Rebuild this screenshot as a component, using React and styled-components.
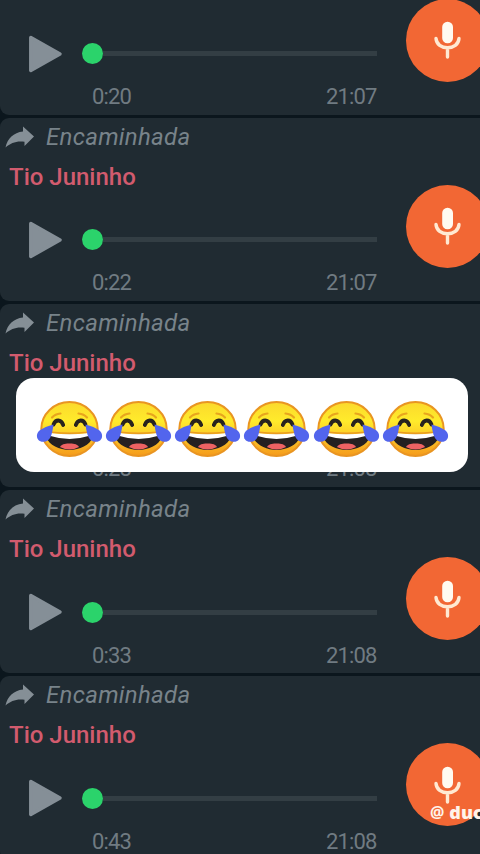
import React from "react"
import styled, { createGlobalStyle } from "styled-components"

const messages = [
  { id: 1, elapsed: "0:20", sentAt: "21:07", continued: true, hasMic: true },
  { id: 2, elapsed: "0:22", sentAt: "21:07", hasMic: true },
  { id: 3, elapsed: "0:28", sentAt: "21:08" },
  { id: 4, elapsed: "0:33", sentAt: "21:08", hasMic: true },
  { id: 5, elapsed: "0:43", sentAt: "21:08", hasMic: true },
]

const ForwardIcon = () => (
  <svg width="30" height="24" viewBox="0 0 30 24">
    <path
      d="M18 1.500 29 11.500 19.500 21v-4.200C11 15.800 6 18 .5 22.500 2.500 13.500 8.500 7.500 18 6.500z"
      fill="#858f96"
    />
  </svg>
)

const PlayIcon = () => (
  <svg width="36" height="40" viewBox="0 0 36 40">
    <path
      d="M2.800 3.500 32 20 2.800 36.500z"
      fill="#858f97"
      stroke="#858f97"
      strokeWidth="3.500"
      strokeLinejoin="round"
    />
  </svg>
)

const MicIcon = () => (
  <svg width="28" height="38" viewBox="0 0 28 38">
    <rect x="8.200" y="0.800" width="10.800" height="21.400" rx="5.300" fill="#fffaf0" />
    <path
      d="M2 17.500C2.500 23.500 7.500 26.800 13.500 26.800S24.500 23.500 25 17.500M13.500 27v9"
      fill="none"
      stroke="#ffe9d2"
      strokeWidth="3.400"
      strokeLinecap="round"
    />
  </svg>
)

const JoyEmoji = () => (
  <svg width="67" height="60" viewBox="0 0 67 60">
    <defs>
      <linearGradient id="face" x1="0" y1="0" x2="0" y2="1">
        <stop offset="0" stopColor="#fbd92c" />
        <stop offset="0.35" stopColor="#ffeb2b" />
        <stop offset="0.62" stopColor="#fccb28" />
        <stop offset="1" stopColor="#f59a1b" />
      </linearGradient>
    </defs>
    <ellipse
      cx="33.500"
      cy="30"
      rx="28.200"
      ry="27"
      fill="url(#face)"
      stroke="#e99522"
      strokeWidth="2"
    />
    <path
      d="M16 18.500Q19 15 24.500 14.500M42.500 14.500Q48 15 51 18.500"
      fill="none"
      stroke="#e8a51d"
      strokeWidth="2.200"
      strokeLinecap="round"
    />
    <path
      d="M17.500 25.500C19.500 20.200 25 20 27.200 26M39.800 26C42 20 47.500 20.200 49.500 25.500"
      fill="none"
      stroke="#28231e"
      strokeWidth="3.800"
      strokeLinecap="round"
    />
    <path
      d="M13.500 34.500Q33.500 37 53.500 34.500L57 38C54 46 43.500 51 33.500 51S13 46 10 38z"
      fill="#252021"
    />
    <path d="M15 34Q33.500 36.500 52 34L52.500 37Q43 40 33.500 40T14.500 37z" fill="#fff" />
    <path
      d="M15.500 33.200Q33.500 35.500 51.500 33.200"
      fill="none"
      stroke="#e99a20"
      strokeWidth="1.500"
    />
    <path
      d="M24 48C26 44.500 31 44.500 33.500 44.500S41 44.500 43 48Q38 50.500 33.500 50.500T24 48z"
      fill="#ee6263"
    />
    <path
      d="M17.500 25.500Q9 27.500 3.500 31.500C-1 35.500.5 42.500 7 42.800 14.500 43 16 36 17.500 25.500z"
      fill="#5265ed"
    />
    <path
      d="M49.500 25.500Q58 27.500 63.500 31.500C68 35.500 66.500 42.500 60 42.800 52.500 43 51 36 49.500 25.500z"
      fill="#5265ed"
    />
  </svg>
)

const VoiceMessage = ({ elapsed, sentAt, continued, hasMic }) => (
  <Bubble>
    <Content>
      <Header>
        {!continued && (
          <>
            <Forwarded>
              <ForwardIcon />
              <ForwardedLabel>Encaminhada</ForwardedLabel>
            </Forwarded>
            <Sender>Tio Juninho</Sender>
          </>
        )}
      </Header>
      <Player>
        <PlayIcon />
        <Track>
          <Knob />
          <Line />
        </Track>
      </Player>
      <Times>
        <span>{elapsed}</span>
        <span>{sentAt}</span>
      </Times>
    </Content>
    {hasMic && (
      <MicBadge>
        <MicIcon />
      </MicBadge>
    )}
  </Bubble>
)

const App = () => (
  <Screen>
    <GlobalStyle />
    <List>
      {messages.map(message => (
        <VoiceMessage key={message.id} {...message} />
      ))}
    </List>
    <Caption>
      {Array.from({ length: 6 }, (_, i) => (
        <JoyEmoji key={i} />
      ))}
    </Caption>
    <Watermark>
      <At>@</At>duc
    </Watermark>
  </Screen>
)

const GlobalStyle = createGlobalStyle`
  * {
    box-sizing: border-box;
  }
  body {
    margin: 0;
    background: #0b161d;
  }
  svg {
    display: block;
    flex-shrink: 0;
  }
`

const Screen = styled.main`
  position: relative;
  width: 480px;
  height: 854px;
  overflow: hidden;
  background: #0b161d;
  font-family: Roboto, "Liberation Sans", sans-serif;
`

const List = styled.div`
  display: flex;
  flex-direction: column;
  gap: 3px;
  margin-top: -68.300px;
`

const Bubble = styled.article`
  display: flex;
  flex-shrink: 0;
  width: 492px;
  height: 183.200px;
  background: #202b32;
  border-radius: 9px;
`

const Content = styled.div`
  width: 406px;
  flex-shrink: 0;
`

const Header = styled.div`
  height: 79px;
`

const Forwarded = styled.div`
  display: flex;
  align-items: center;
  height: 38px;
  padding-left: 5px;
  gap: 11px;
`

const ForwardedLabel = styled.span`
  color: #78838a;
  font-size: 24px;
  font-style: italic;
  letter-spacing: 0.300px;
`

const Sender = styled.div`
  height: 41px;
  padding-left: 9px;
  color: #d25b6e;
  font-size: 24px;
  font-weight: 500;
  line-height: 42px;
`

const Player = styled.div`
  display: flex;
  align-items: center;
  height: 86px;
  padding-left: 28px;
`

const Track = styled.div`
  display: flex;
  align-items: center;
  width: 295px;
  margin-left: 18px;
`

const Knob = styled.span`
  width: 21px;
  height: 21px;
  flex-shrink: 0;
  border-radius: 50%;
  background: #2bd36b;
`

const Line = styled.span`
  flex: 1;
  height: 5px;
  background: #333e44;
`

const Times = styled.div`
  display: flex;
  justify-content: space-between;
  width: 376.500px;
  margin-top: -13.700px;
  padding-left: 92px;
  color: #707b82;
  font-size: 22px;
  line-height: 28px;
  letter-spacing: -0.850px;
`

const MicBadge = styled.div`
  display: flex;
  align-items: center;
  justify-content: center;
  width: 83px;
  height: 83px;
  flex-shrink: 0;
  margin-top: 67px;
  border-radius: 50%;
  background: #f26734;
`

const Caption = styled.div`
  position: absolute;
  top: 378px;
  left: 15.500px;
  display: flex;
  align-items: center;
  gap: 2.300px;
  width: 452px;
  height: 94px;
  padding: 8px 0 0 20px;
  border-radius: 18px;
  background: #fff;
`

const Watermark = styled.div`
  position: absolute;
  top: 801px;
  left: 430px;
  display: flex;
  align-items: center;
  gap: 5px;
  color: #fff3ea;
  font-family: "Open Sans", sans-serif;
  font-size: 18px;
  font-weight: 800;
  line-height: 22px;
`

const At = styled.span`
  font-size: 16px;
  font-weight: 700;
`

export default App
